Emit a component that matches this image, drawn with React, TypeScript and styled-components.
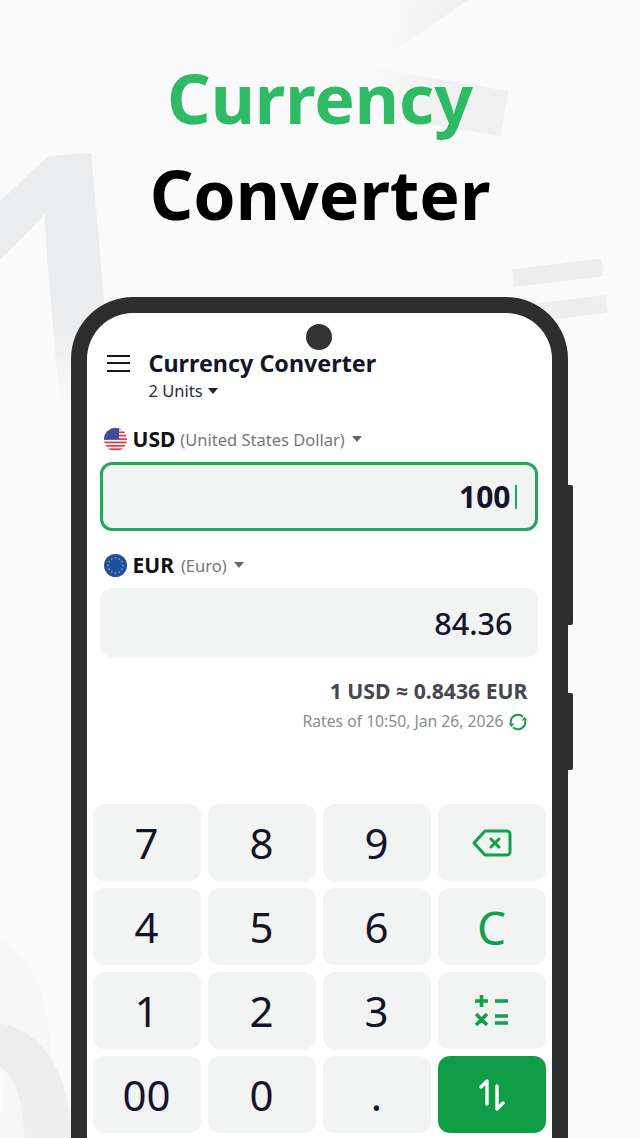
import React from "react";
import styled, { createGlobalStyle } from "styled-components";

const GlobalStyle = createGlobalStyle`
  html, body {
    margin: 0;
    padding: 0;
    background: #fafafa;
  }
`;

const Page = styled.div`
  position: relative;
  width: 640px;
  height: 1138px;
  overflow: hidden;
  background: #fafafa;
  font-family: "Noto Sans", "Open Sans", sans-serif;
  display: flex;
  flex-direction: column;
  align-items: center;
  padding-top: 50px;
  box-sizing: border-box;
`;

const GhostDigit = styled.span<{ $x: number; $y: number; $size: number; $rot: number; $color?: string; $fade?: string }>`
  position: absolute;
  left: ${(p) => p.$x}px;
  top: ${(p) => p.$y}px;
  font-size: ${(p) => p.$size}px;
  line-height: 1;
  font-weight: 600;
  color: ${(p) => p.$color || "#eeeeef"};
  transform: rotate(${(p) => p.$rot}deg);
  ${(p) => p.$fade && `mask-image: linear-gradient(${p.$fade});`}
`;

const Title = styled.h1<{ $green?: boolean }>`
  position: relative;
  margin: 0;
  font-size: 68px;
  line-height: 96px;
  font-weight: 700;
  color: ${(p) => (p.$green ? "#2fba66" : "#000")};
`;

const Phone = styled.div`
  position: relative;
  margin: 55px 2px 0 0;
  width: 497px;
  height: 900px;
  box-sizing: border-box;
  border: 16px solid #2e2e2e;
  border-bottom: none;
  border-radius: 62px 62px 0 0;
  background: #fff;
  flex-shrink: 0;
`;

const SideButton = styled.div<{ $top: number; $height: number }>`
  position: absolute;
  right: -21px;
  top: ${(p) => p.$top}px;
  width: 5px;
  height: ${(p) => p.$height}px;
  background: #2e2e2e;
  border-radius: 0 2px 2px 0;
`;

const Camera = styled.div`
  position: absolute;
  left: 219px;
  top: 11px;
  width: 26px;
  height: 26px;
  border-radius: 50%;
  background: #333;
`;

const Screen = styled.div`
  display: flex;
  flex-direction: column;
  height: 100%;
`;

const Header = styled.div`
  display: flex;
  gap: 19px;
  padding: 33px 0 0 20px;
`;

const MenuIcon = styled.div`
  width: 23px;
  height: 17px;
  margin-top: 9px;
  border-top: 2.5px solid #14142b;
  border-bottom: 2.5px solid #14142b;
  box-sizing: border-box;
  position: relative;
  &::after {
    content: "";
    position: absolute;
    left: 0;
    right: 0;
    top: 4.5px;
    height: 2.5px;
    background: #14142b;
  }
`;

const HeaderText = styled.div`
  display: flex;
  flex-direction: column;
`;

const AppName = styled.div`
  font-size: 23.3px;
  line-height: 34px;
  font-weight: 700;
  color: #14142b;
`;

const Units = styled.div`
  display: flex;
  align-items: center;
  gap: 5px;
  font-size: 16.5px;
  line-height: 22px;
  color: #2a2a3a;
`;

const Caret = styled.span<{ $color?: string }>`
  display: inline-block;
  width: 0;
  height: 0;
  border-left: 5px solid transparent;
  border-right: 5px solid transparent;
  border-top: 6px solid ${(p) => p.$color || "#222"};
`;

const CurrencyRow = styled.div<{ $top: number }>`
  display: flex;
  align-items: center;
  margin-top: ${(p) => p.$top}px;
  padding-left: 17px;
  height: 30px;
`;

const Code = styled.span`
  margin-left: 6px;
  font-size: 21px;
  font-weight: 700;
  color: #111;
`;

const FullName = styled.span<{ $gap: number }>`
  margin-left: ${(p) => p.$gap}px;
  margin-right: 7px;
  font-size: 16.5px;
  color: #777;
`;

const ValueBox = styled.div<{ $active?: boolean }>`
  display: flex;
  align-items: center;
  justify-content: flex-end;
  box-sizing: border-box;
  margin: 8px 14px 0 13px;
  height: 69px;
  padding-right: ${(p) => (p.$active ? "18px" : "25px")};
  border-radius: 12px;
  background: #f2f3f3;
  border: ${(p) => (p.$active ? "3px solid #22a85a" : "none")};
  font-size: ${(p) => (p.$active ? 30 : 30.6)}px;
  font-weight: ${(p) => (p.$active ? 700 : 500)};
  color: #14142b;
`;

const Cursor = styled.span`
  width: 2px;
  height: 24px;
  margin-left: 4px;
  background: #22a85a;
`;

const RateBlock = styled.div`
  display: flex;
  flex-direction: column;
  align-items: flex-end;
  padding-right: 24px;
  margin-top: 19px;
`;

const RateValue = styled.div`
  font-size: 21.2px;
  line-height: 30px;
  font-weight: 700;
  color: #444650;
`;

const RateTime = styled.div`
  display: flex;
  align-items: center;
  gap: 4px;
  font-size: 15.7px;
  line-height: 31px;
  color: #8b8d91;
`;

const Keypad = styled.div`
  display: grid;
  grid-template-columns: repeat(4, 108px);
  grid-auto-rows: 77px;
  gap: 7px;
  margin-top: 67px;
  padding-left: 6px;
`;

const Key = styled.div<{ $accent?: boolean; $green?: boolean }>`
  display: flex;
  align-items: center;
  justify-content: center;
  border-radius: 12px;
  background: ${(p) => (p.$accent ? "#0f9d46" : "#f2f3f3")};
  color: ${(p) => (p.$green ? "#12a04b" : "#14142b")};
  font-size: ${(p) => (p.$green ? 46 : 42)}px;
  font-weight: 400;
`;

const UsFlag = () => (
  <svg width="23" height="23" viewBox="0 0 23 23">
    <defs>
      <clipPath id="us">
        <circle cx="11.5" cy="11.5" r="11.5" />
      </clipPath>
    </defs>
    <g clipPath="url(#us)">
      <rect width="23" height="23" fill="#f4f4f6" />
      {[0, 3.4, 6.8, 10.2, 13.6, 17, 20.4].map((y) => (
        <rect key={y} y={y} width="23" height="1.7" fill="#d8404e" />
      ))}
      <rect width="15" height="11.5" fill="#3f4f97" />
    </g>
  </svg>
);

const EuFlag = () => (
  <svg width="23" height="23" viewBox="0 0 23 23">
    <circle cx="11.5" cy="11.5" r="11.5" fill="#1f4fa3" />
    {Array.from({ length: 12 }).map((_, i) => (
      <circle
        key={i}
        cx={11.5 + 7.5 * Math.cos((i * Math.PI) / 6)}
        cy={11.5 + 7.5 * Math.sin((i * Math.PI) / 6)}
        r="0.7"
        fill="#d9c65a"
      />
    ))}
  </svg>
);

const RefreshIcon = () => (
  <svg width="20" height="20" viewBox="0 0 20 20" fill="none" stroke="#12a04b" strokeWidth="2">
    <path d="M3 11.5A7.2 7.2 0 0 1 15 4.8" />
    <path d="M17 8.5A7.2 7.2 0 0 1 5 15.2" />
    <path d="M13.6 8.4h5.8l-2.9-3.6z" fill="#12a04b" stroke="none" />
    <path d="M6.4 11.6H.6l2.9 3.6z" fill="#12a04b" stroke="none" />
  </svg>
);

const BackspaceIcon = () => (
  <svg width="40" height="28" viewBox="0 0 40 28" fill="none" stroke="#12a04b" strokeWidth="3" strokeLinejoin="round">
    <path d="M13 2h22a3 3 0 0 1 3 3v18a3 3 0 0 1-3 3H13L2 14z" />
    <path d="M19 10l8 8M27 10l-8 8" strokeLinecap="round" />
  </svg>
);

const OperatorsIcon = () => (
  <svg width="33" height="31" viewBox="0 0 33 31" stroke="#12a04b" strokeWidth="3.6" fill="none">
    <path d="M0 6h13M6.5 0v12M20 6h13M1 19l11 11M12 19L1 30M20 21h13M20 28h13" />
  </svg>
);

const SwapIcon = () => (
  <svg width="28" height="32" viewBox="0 0 28 32" fill="none" stroke="#fff" strokeWidth="3.4" strokeLinecap="round" strokeLinejoin="round">
    <path d="M3 8l6-6v23" />
    <path d="M25 24l-6 6V7" />
  </svg>
);

const rows: { label: React.ReactNode; green?: boolean; accent?: boolean }[] = [
  { label: "7" },
  { label: "8" },
  { label: "9" },
  { label: <BackspaceIcon />, green: true },
  { label: "4" },
  { label: "5" },
  { label: "6" },
  { label: "C", green: true },
  { label: "1" },
  { label: "2" },
  { label: "3" },
  { label: <OperatorsIcon />, green: true },
  { label: "00" },
  { label: "0" },
  { label: "." },
  { label: <SwapIcon />, accent: true },
];

export default function App() {
  return (
    <Page>
      <GlobalStyle />
      <GhostDigit $x={-61} $y={83} $size={420} $rot={-5} $color="#ebecee" $fade="to bottom, black 58%, transparent 76%">1</GhostDigit>
      <GhostDigit $x={307} $y={-252} $size={420} $rot={10} $color="#f0f0f1" $fade="to right, transparent 35%, black 65%">2</GhostDigit>
      <GhostDigit $x={505} $y={190} $size={190} $rot={-7}>=</GhostDigit>
      <GhostDigit $x={-150} $y={867} $size={380} $rot={0} $color="#f7f7f7">0</GhostDigit>
      <GhostDigit $x={-128} $y={960} $size={380} $rot={0} $color="#eeeeef">0</GhostDigit>
      <Title $green>Currency</Title>
      <Title>Converter</Title>
      <Phone>
        <SideButton $top={172} $height={140} />
        <SideButton $top={380} $height={77} />
        <Camera />
        <Screen>
          <Header>
            <MenuIcon />
            <HeaderText>
              <AppName>Currency Converter</AppName>
              <Units>
                2 Units <Caret />
              </Units>
            </HeaderText>
          </Header>
          <CurrencyRow $top={22}>
            <UsFlag />
            <Code>USD</Code>
            <FullName $gap={5}>(United States Dollar)</FullName>
            <Caret $color="#666" />
          </CurrencyRow>
          <ValueBox $active>
            100
            <Cursor />
          </ValueBox>
          <CurrencyRow $top={19}>
            <EuFlag />
            <Code>EUR</Code>
            <FullName $gap={7}>(Euro)</FullName>
            <Caret $color="#666" />
          </CurrencyRow>
          <ValueBox>84.36</ValueBox>
          <RateBlock>
            <RateValue>1 USD ≈ 0.8436 EUR</RateValue>
            <RateTime>
              Rates of 10:50, Jan 26, 2026
              <RefreshIcon />
            </RateTime>
          </RateBlock>
          <Keypad>
            {rows.map((k, i) => (
              <Key key={i} $green={k.green} $accent={k.accent}>
                {k.label}
              </Key>
            ))}
          </Keypad>
        </Screen>
      </Phone>
    </Page>
  );
}
